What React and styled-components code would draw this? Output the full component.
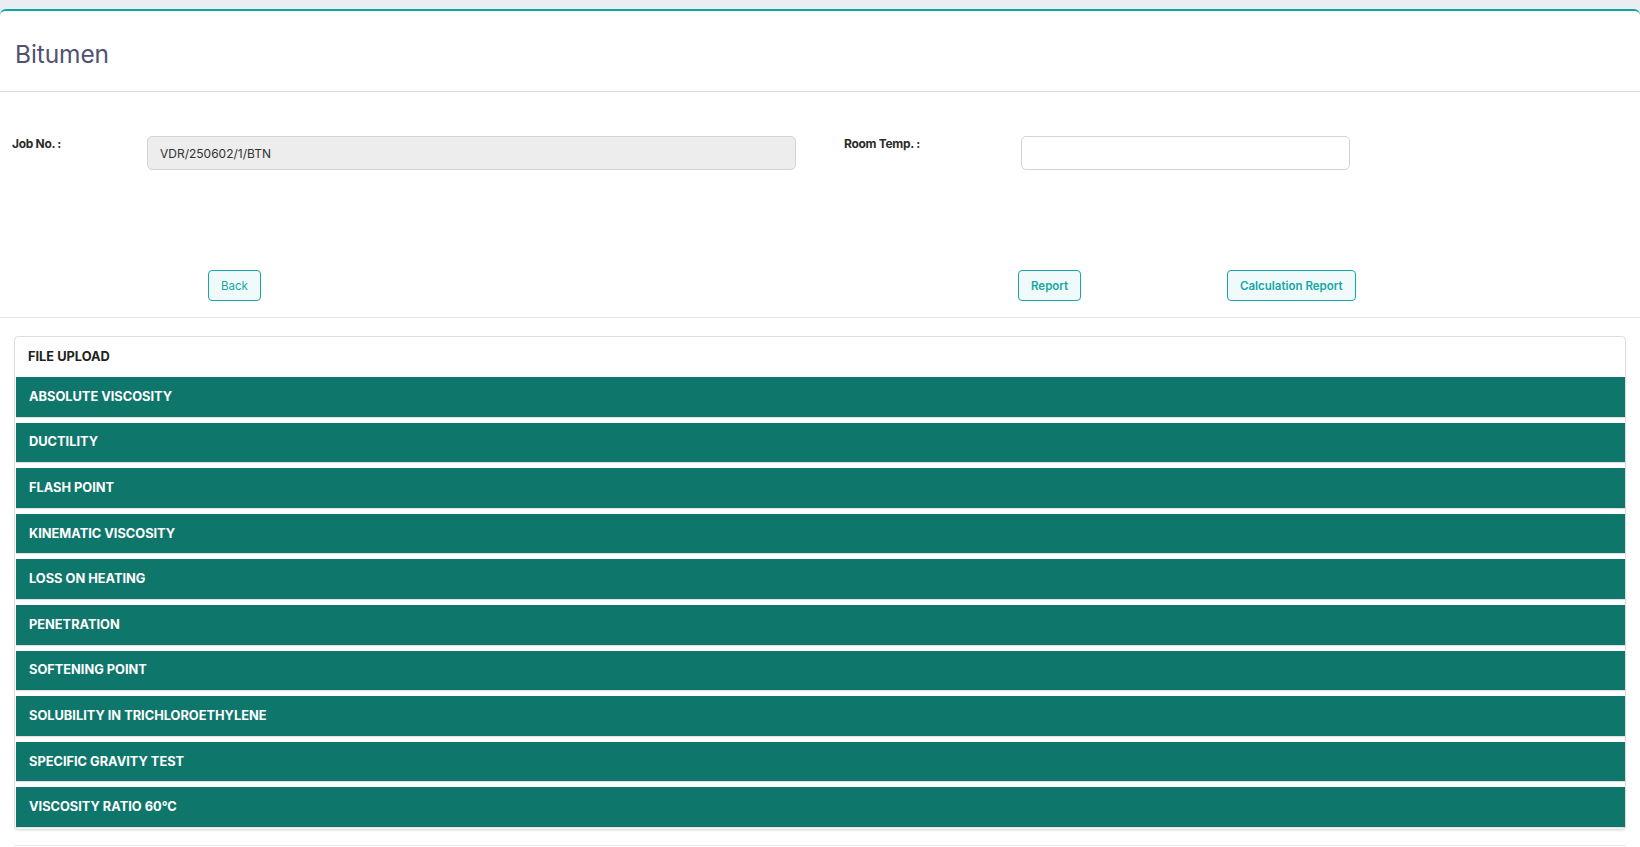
import React from "react";
import styled, { createGlobalStyle } from "styled-components";

const GlobalStyle = createGlobalStyle`
  html, body {
    margin: 0;
    padding: 0;
    background: #ffffff;
    font-family: Inter, "Noto Sans", sans-serif;
  }
  * { box-sizing: border-box; }
`;

const tests = [
  "ABSOLUTE VISCOSITY",
  "DUCTILITY",
  "FLASH POINT",
  "KINEMATIC VISCOSITY",
  "LOSS ON HEATING",
  "PENETRATION",
  "SOFTENING POINT",
  "SOLUBILITY IN TRICHLOROETHYLENE",
  "SPECIFIC GRAVITY TEST",
  "VISCOSITY RATIO 60°C",
];

function App() {
  return (
    <Page>
      <GlobalStyle />
      <MainCard>
        <CardHeader>
          <Title>Bitumen</Title>
        </CardHeader>
        <CardBody>
          <FormRow>
            <Field $label="135px" $input="649px">
              <Label>Job No. :</Label>
              <Input value="VDR/250602/1/BTN" readOnly disabled />
            </Field>
            <Field $label="177px" $input="329px">
              <Label>Room Temp. :</Label>
              <Input defaultValue="" />
            </Field>
          </FormRow>
          <ButtonRow>
            <OutlineButton>Back</OutlineButton>
            <OutlineButton $bold>Report</OutlineButton>
            <OutlineButton $bold>Calculation Report</OutlineButton>
          </ButtonRow>
        </CardBody>
        <UploadSection>
          <UploadCard>
            <UploadTitle>FILE UPLOAD</UploadTitle>
            <BarList>
              {tests.map((t) => (
                <TestBar key={t}>{t}</TestBar>
              ))}
            </BarList>
          </UploadCard>
          <NextCard />
        </UploadSection>
      </MainCard>
    </Page>
  );
}

export default App;

const Page = styled.div`
  background: #eaedf2;
  padding-top: 9px;
  min-height: 847px;
`;

const MainCard = styled.div`
  background: #ffffff;
  border-top: 2px solid #0aa7a1;
  border-radius: 6px 6px 0 0;
  min-height: 838px;
`;

const CardHeader = styled.div`
  height: 81px;
  display: flex;
  align-items: center;
  padding: 6px 15px 0;
  border-bottom: 1px solid #dcdcdc;
`;

const Title = styled.h3`
  margin: 0;
  font-size: 24.5px;
  font-weight: 400;
  color: #525270;
  letter-spacing: -0.1px;
`;

const CardBody = styled.div`
  padding: 44px 0 16px;
  border-bottom: 1px solid #e6e6e6;
`;

const FormRow = styled.div`
  display: flex;
  gap: 48px;
  padding-left: 12px;
`;

const Field = styled.div`
  display: grid;
  grid-template-columns: ${(p) => p.$label} ${(p) => p.$input};
  align-items: start;
`;

const Label = styled.label`
  font-size: 12px;
  font-weight: 700;
  color: #2b2b2b;
  line-height: 16px;
  letter-spacing: -0.3px;
`;

const Input = styled.input`
  height: 34px;
  width: 100%;
  border: 1px solid #d3d2dd;
  border-radius: 5px;
  background: #ffffff;
  padding: 0 12px;
  font-family: Inter, sans-serif;
  font-size: 12px;
  color: #333333;
  outline: none;

  &:disabled {
    background: #ededed;
    color: #333333;
    -webkit-text-fill-color: #333333;
    opacity: 1;
  }
`;

const ButtonRow = styled.div`
  display: grid;
  grid-template-columns: 810px 209px auto;
  justify-items: start;
  padding-left: 208px;
  margin-top: 100px;
`;

const OutlineButton = styled.button`
  height: 31px;
  padding: 0 12px;
  border: 1px solid #14a8a6;
  border-radius: 4px;
  background: #f1fafa;
  color: #14a8a6;
  font-family: Inter, sans-serif;
  font-size: 11.5px;
  font-weight: ${(p) => (p.$bold ? 600 : 400)};
  cursor: pointer;
`;

const UploadSection = styled.div`
  padding: 18px 14px 0;
`;

const UploadCard = styled.div`
  border: 1px solid #dedede;
  border-radius: 4px;
  box-shadow: 0 1px 2px rgba(0, 0, 0, 0.08);
`;

const UploadTitle = styled.div`
  height: 40px;
  display: flex;
  align-items: center;
  padding: 0 13px 2px;
  font-size: 12.8px;
  font-weight: 700;
  color: #222222;
`;

const BarList = styled.div`
  display: flex;
  flex-direction: column;
  gap: 6px;
  padding: 0 0 2px 1px;
`;

const TestBar = styled.div`
  height: 39.6px;
  display: flex;
  align-items: center;
  padding: 0 13px 1px;
  background: #0f766c;
  color: #ffffff;
  font-size: 12.8px;
  font-weight: 700;
  box-shadow: 0 1px 1px rgba(0, 0, 0, 0.12);
`;

const NextCard = styled.div`
  margin-top: 15px;
  height: 10px;
  border-top: 1px solid #e8e8e8;
`;
